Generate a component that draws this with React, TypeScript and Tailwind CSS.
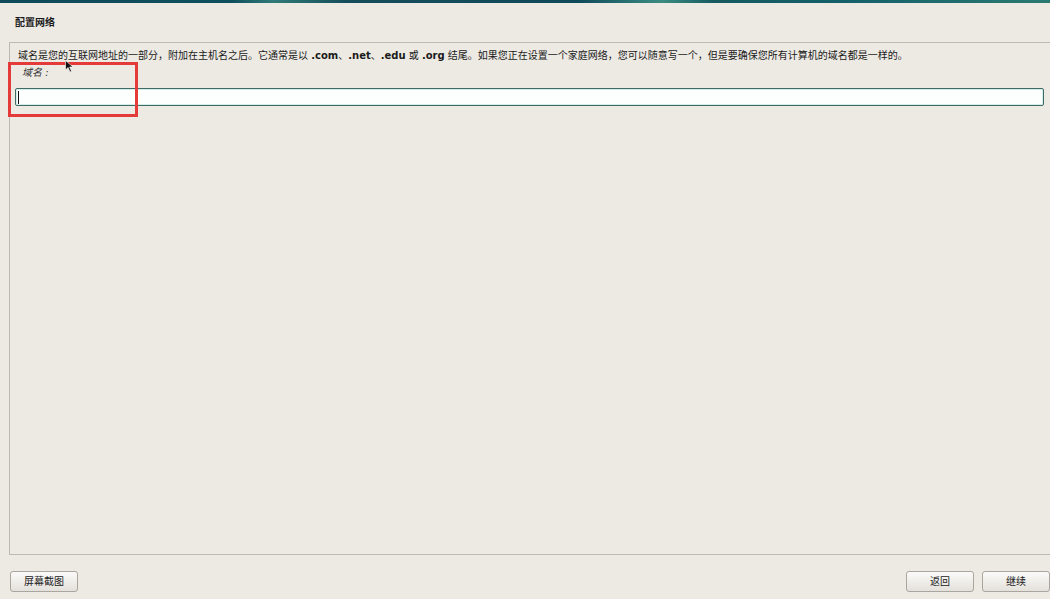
import React from "react";

const font = { fontFamily: '"DejaVu Sans", "Noto Sans CJK SC", sans-serif' };

function Btn({ children }: { children: React.ReactNode }) {
  return (
    <button className="w-[68px] h-[21px] rounded-[3px] border border-[#a9a6a0] bg-[linear-gradient(#fbfaf8,#e4e1dc)] text-[10px] text-[#222] flex items-center justify-center leading-none">
      {children}
    </button>
  );
}

export default function App() {
  return (
    <div
      className="relative w-[1050px] h-[599px] overflow-hidden bg-[#edeae4] flex flex-col text-[#1a1a1a]"
      style={font}
    >
      <div className="h-[3px] shrink-0 bg-[linear-gradient(90deg,#0e4a5a_0%,#0f4f5e_22%,#2f7b78_26%,#164d5b_33%,#0f4a5a_55%,#3a8c82_63%,#175a60_68%,#12606a_80%,#2a7a72_100%)]" />
      <div className="h-[39px] shrink-0 flex items-center pl-[15px]">
        <span className="text-[10px] font-bold leading-none">配置网络</span>
      </div>
      <div className="ml-[9px] h-[513px] shrink-0 border-t border-l border-b border-[#bdbab3] flex flex-col pt-[6px]">
        <div className="pl-[8px] text-[10px] leading-[13px] whitespace-nowrap">
          域名是您的互联网地址的一部分，附加在主机名之后。它通常是以 <b>.com</b>、<b>.net</b>、<b>.edu</b> 或 <b>.org</b> 结尾。如果您正在设置一个家庭网络，您可以随意写一个，但是要确保您所有计算机的域名都是一样的。
        </div>
        <div className="pl-[12px] mt-[4px] text-[10px] leading-[13px] italic text-[#333]">域名 :</div>
        <div className="ml-[5px] mr-[6px] mt-[9px] h-[18px] rounded-[2px] border border-[#3f6b66] bg-[#fdfffe] shadow-[inset_0_0_0_1px_#d6ece8] flex items-center pl-[2px]">
          <div className="w-[1px] h-[13px] bg-[#111]" />
        </div>
      </div>
      <div className="flex-1 flex items-start pt-[16px] pl-[10px]">
        <Btn>屏幕截图</Btn>
        <div className="flex-1" />
        <div className="flex gap-[8px]">
          <Btn>返回</Btn>
          <Btn>继续</Btn>
        </div>
      </div>
      <div className="absolute left-[8px] top-[62px] w-[130px] h-[55px] border-[3px] border-[#e43a3a]" />
      <svg className="absolute left-[65px] top-[60px]" width="9" height="13" viewBox="0 0 9 13">
        <path d="M0.5 0.5 L0.5 10 L3 7.5 L5 12 L6.5 11.3 L4.6 7 L8 7 Z" fill="#111" stroke="#fff" strokeWidth="0.6" />
      </svg>
    </div>
  );
}
